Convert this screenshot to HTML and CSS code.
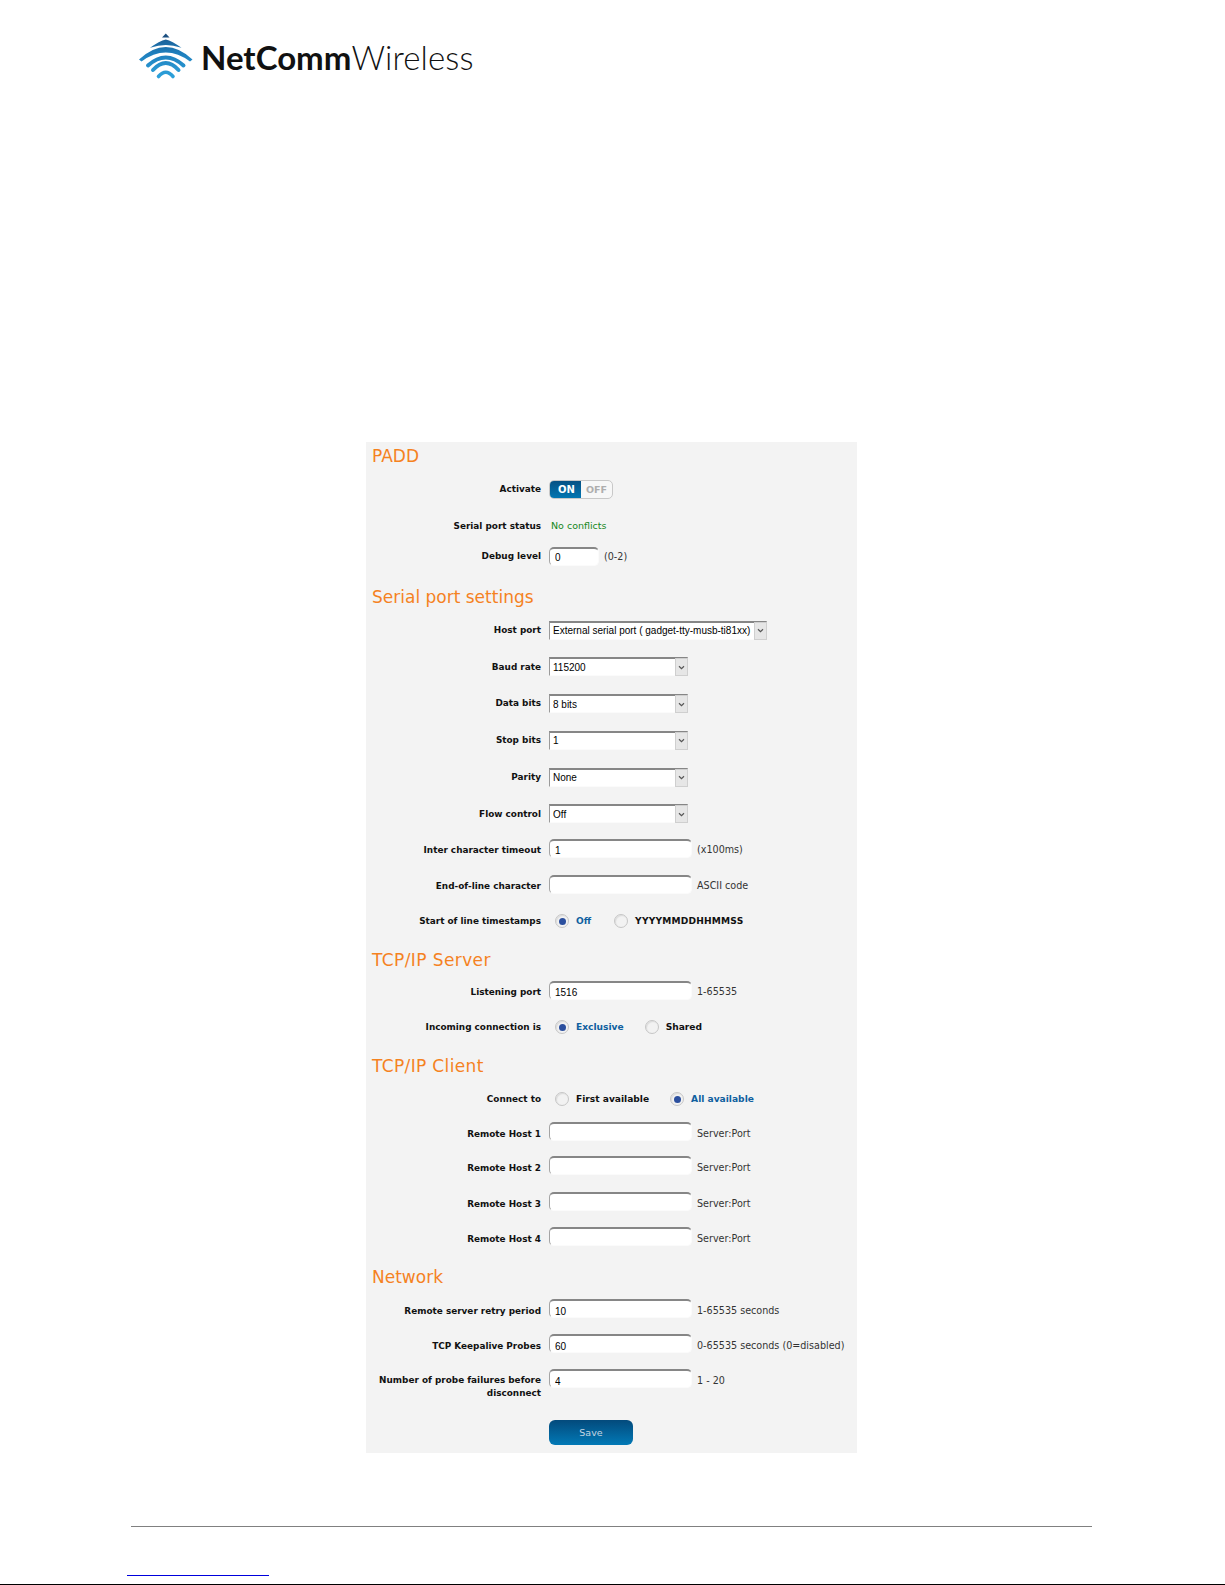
FILE: index.html
```html
<!DOCTYPE html>
<html lang="en">
<head>
<meta charset="utf-8">
<title>PADD settings</title>
<link rel="stylesheet" href="styles.css">
</head>
<body>
<div class="page">
  <header class="header">
    <svg class="logo-icon" viewBox="138 32 56 48" aria-hidden="true">
      <defs>
        <linearGradient id="waves" gradientUnits="userSpaceOnUse" x1="0" y1="33" x2="0" y2="78">
          <stop offset="0" stop-color="#1b5488"/>
          <stop offset="0.45" stop-color="#1f7fbd"/>
          <stop offset="1" stop-color="#2ea3dc"/>
        </linearGradient>
      </defs>
      <path fill="#1b4f80" d="M165.8 33.5 L169.5 37.5 H162 Z"/>
      <path fill="url(#waves)" d="M165.8 39.5 Q172 41 181.5 47.8 Q173 45 165.8 45 Q158.5 45 150 47.8 Q159.5 41 165.8 39.5 Z"/>
      <path fill="url(#waves)" d="M165.8 47 Q179 47 192.5 59.5 L190 61.5 Q178 52.5 165.8 52.5 Q153.5 52.5 141.5 61.5 L139 59.5 Q152.5 47 165.8 47 Z"/>
      <path fill="none" stroke="url(#waves)" stroke-width="4" stroke-linecap="round" d="M148 65 Q165.8 49 183.5 65" transform="translate(0 0.5)"/>
      <path fill="none" stroke="url(#waves)" stroke-width="4" stroke-linecap="round" d="M153 70 Q165.8 56 178.5 70"/>
      <path fill="none" stroke="url(#waves)" stroke-width="3.6" stroke-linecap="round" d="M158.5 76.5 Q165.8 68 173 76.5"/>
    </svg>
    <div class="logo-text"><span class="logo-strong">NetComm</span><span class="logo-light">Wireless</span></div>
  </header>

  <main class="panel">
    <h2 class="heading heading-first">PADD</h2>
    <div class="row gap-17h"><span class="label">Activate</span>
      <div class="toggle"><span class="toggle-on">ON</span><span class="toggle-off">OFF</span></div></div>
    <div class="row gap-11"><span class="label">Serial port status</span><span class="status">No conflicts</span></div>
    <div class="row"><span class="label">Debug level</span>
      <div class="field"><input class="input input-short" type="text" value="0"><span class="hint">(0-2)</span></div></div>

    <h2 class="heading sec-serial">Serial port settings</h2>
    <div class="row gap-select"><span class="label">Host port</span>
      <div class="select-wrap select-long"><select class="select"><option>External serial port ( gadget-tty-musb-ti81xx)</option></select>
        <span class="select-arrow"><svg viewBox="0 0 8 6"><path d="M1 1.5 L4 4.5 L7 1.5" fill="none" stroke="#555" stroke-width="1.4"/></svg></span></div></div>
    <div class="row gap-select"><span class="label">Baud rate</span>
      <div class="select-wrap"><select class="select"><option>115200</option></select>
        <span class="select-arrow"><svg viewBox="0 0 8 6"><path d="M1 1.5 L4 4.5 L7 1.5" fill="none" stroke="#555" stroke-width="1.4"/></svg></span></div></div>
    <div class="row gap-select"><span class="label">Data bits</span>
      <div class="select-wrap"><select class="select"><option>8 bits</option></select>
        <span class="select-arrow"><svg viewBox="0 0 8 6"><path d="M1 1.5 L4 4.5 L7 1.5" fill="none" stroke="#555" stroke-width="1.4"/></svg></span></div></div>
    <div class="row gap-select"><span class="label">Stop bits</span>
      <div class="select-wrap"><select class="select"><option>1</option></select>
        <span class="select-arrow"><svg viewBox="0 0 8 6"><path d="M1 1.5 L4 4.5 L7 1.5" fill="none" stroke="#555" stroke-width="1.4"/></svg></span></div></div>
    <div class="row gap-select"><span class="label">Parity</span>
      <div class="select-wrap"><select class="select"><option>None</option></select>
        <span class="select-arrow"><svg viewBox="0 0 8 6"><path d="M1 1.5 L4 4.5 L7 1.5" fill="none" stroke="#555" stroke-width="1.4"/></svg></span></div></div>
    <div class="row gap-17"><span class="label">Flow control</span>
      <div class="select-wrap"><select class="select"><option>Off</option></select>
        <span class="select-arrow"><svg viewBox="0 0 8 6"><path d="M1 1.5 L4 4.5 L7 1.5" fill="none" stroke="#555" stroke-width="1.4"/></svg></span></div></div>
    <div class="row gap-17"><span class="label">Inter character timeout</span>
      <div class="field field-up1"><input class="input" type="text" value="1"><span class="hint">(x100ms)</span></div></div>
    <div class="row gap-16h"><span class="label">End-of-line character</span>
      <div class="field field-up1"><input class="input" type="text" value=""><span class="hint">ASCII code</span></div></div>
    <div class="row"><span class="label">Start of line timestamps</span>
      <div class="radios"><span class="radio radio-on"></span><span class="radio-label radio-label-on radio-label-wide">Off</span>
        <span class="radio"></span><span class="radio-label radio-label-caps">YYYYMMDDHHMMSS</span></div></div>

    <h2 class="heading sec-server">TCP/IP Server</h2>
    <div class="row gap-16h"><span class="label">Listening port</span>
      <div class="field field-up1"><input class="input" type="text" value="1516"><span class="hint">1-65535</span></div></div>
    <div class="row"><span class="label">Incoming connection is</span>
      <div class="radios"><span class="radio radio-on"></span><span class="radio-label radio-label-on">Exclusive</span>
        <span class="radio"></span><span class="radio-label">Shared</span></div></div>

    <h2 class="heading sec-client">TCP/IP Client</h2>
    <div class="row gap-15h"><span class="label">Connect to</span>
      <div class="radios"><span class="radio"></span><span class="radio-label">First available</span>
        <span class="radio radio-on"></span><span class="radio-label radio-label-on">All available</span></div></div>
    <div class="row gap-15"><span class="label">Remote Host 1</span>
      <div class="field field-up2"><input class="input" type="text" value=""><span class="hint">Server:Port</span></div></div>
    <div class="row gap-17"><span class="label">Remote Host 2</span>
      <div class="field field-up2"><input class="input" type="text" value=""><span class="hint">Server:Port</span></div></div>
    <div class="row gap-16"><span class="label">Remote Host 3</span>
      <div class="field field-up2"><input class="input" type="text" value=""><span class="hint">Server:Port</span></div></div>
    <div class="row"><span class="label">Remote Host 4</span>
      <div class="field field-up2"><input class="input" type="text" value=""><span class="hint">Server:Port</span></div></div>

    <h2 class="heading sec-network">Network</h2>
    <div class="row gap-16"><span class="label">Remote server retry period</span>
      <div class="field field-up2"><input class="input" type="text" value="10"><span class="hint">1-65535 seconds</span></div></div>
    <div class="row gap-16"><span class="label">TCP Keepalive Probes</span>
      <div class="field field-up2"><input class="input" type="text" value="60"><span class="hint">0-65535 seconds (0=disabled)</span></div></div>
    <div class="row row-tall"><span class="label">Number of probe failures before disconnect</span>
      <div class="field field-tall"><input class="input" type="text" value="4"><span class="hint">1 - 20</span></div></div>

    <div class="actions"><button class="save" type="button">Save</button></div>
  </main>

  <footer class="footer">
    <hr class="footer-rule">
    <a class="footer-link" href="#"></a>
    <div class="footer-edge"></div>
  </footer>
</div>
</body>
</html>
```
FILE: styles.css
```css
* { box-sizing: border-box; }
html, body { margin: 0; padding: 0; background: #fff; }
body { font-family: "DejaVu Sans", Verdana, sans-serif; color: #000; }

.page { width: 1225px; height: 1585px; overflow: hidden; display: flex; flex-direction: column; }

/* Header / logo */
.header { height: 442px; padding: 32px 0 0 138px; display: flex; align-items: flex-start; gap: 7px; flex: none; }
.logo-icon { width: 56px; height: 48px; flex: none; }
.logo-text { font-family: Lato, "Open Sans", sans-serif; line-height: 50px; color: #111; white-space: nowrap; }
.logo-strong { font-size: 33px; font-weight: 700; }
.logo-light { font-size: 33px; font-weight: 300; letter-spacing: 0.1px; }

/* Panel */
.panel { width: 491px; margin-left: 366px; padding: 3px 0 8px; background: #f3f3f3; flex: none; }

.heading { margin: 0 0 13px; padding-left: 6px; font-size: 17px; line-height: 22px; font-weight: 400; color: #f5821f; }
.sec-serial { margin-top: 19.5px; }
.sec-server { margin-top: 18.5px; margin-bottom: 11px; letter-spacing: 0.4px; }
.sec-client { margin-top: 18.5px; margin-bottom: 12.5px; letter-spacing: 0.35px; }
.sec-network { margin-top: 18px; margin-bottom: 13px; }

.row { display: grid; grid-template-columns: 175px 1fr; grid-template-rows: 19px; column-gap: 8px; align-items: center; height: 19px; }
.row-tall { grid-template-rows: 25px; height: 25px; align-items: start; }
.row-tall .label { padding-top: 3px; }
.gap-11 { margin-bottom: 11.5px; }
.gap-15 { margin-bottom: 15px; }
.gap-15h { margin-bottom: 15.5px; }
.gap-16 { margin-bottom: 16px; }
.gap-16h { margin-bottom: 16.5px; }
.gap-17 { margin-bottom: 17px; }
.gap-17h { margin-bottom: 17.5px; }
.gap-select { margin-bottom: 17.8px; }

.label { text-align: right; font-size: 8.9px; line-height: 12.5px; font-weight: 700; color: #111; }
.hint { font-size: 9.6px; color: #333; white-space: nowrap; }
.status { padding: 0 0 2px 2px; font-size: 9.5px; color: #15881c; }

.field { display: flex; align-items: center; gap: 5px; height: 19px; }
/* Inputs sit slightly above the label's centre line while their text and hint stay on it */
.field-up1 { margin-bottom: 2px; }
.field-up1 .input { padding-top: 2px; }
.field-up1 .hint { padding-top: 2px; }
.field-up2 { margin-bottom: 4px; }
.field-up2 .input { padding-top: 4px; }
.field-up2 .hint { padding-top: 4px; }
.field-tall { margin-top: -2px; }
.field-tall .input { padding-top: 4px; }
.field-tall .hint { padding-top: 4px; }

.input {
  width: 143px; height: 19px; padding: 0 0 0 5px;
  border: 1px solid #fbfbfb; border-top: 2px solid #868686; border-left-color: #a4a4a4;
  border-radius: 5px; background: #fff;
  font-family: "Liberation Sans", Arial, sans-serif; font-size: 10px; color: #000; outline: none;
}
.input-short { width: 50px; }

.select-wrap { position: relative; width: 139px; height: 19px; }
.select-long { width: 218px; }
.select {
  display: block; width: 100%; height: 100%; padding: 0 14px 0 3px; appearance: none;
  border: 1px solid #fbfbfb; border-top: 2px solid #868686; border-left-color: #9a9a9a; border-radius: 0;
  background: #fff; font-family: "Liberation Sans", Arial, sans-serif; font-size: 10px; color: #000; outline: none;
}
.select-arrow {
  position: absolute; top: 1px; right: 0; bottom: 0; width: 13px;
  display: flex; align-items: center; justify-content: center;
  background: #e6e6e6; border: 1px solid #cfcfcf;
}
.select-arrow svg { width: 7px; height: 5px; display: block; }

.radios { display: flex; align-items: center; height: 19px; padding-left: 6px; }
.radio {
  width: 14px; height: 14px; border-radius: 50%; flex: none; position: relative;
  background: #f2f2f2; border: 1px solid #c6c6c6; box-shadow: inset 1px 1px 1px #dcdcdc;
}
.radio-on::after {
  content: ""; position: absolute; left: 2.5px; top: 2.5px; width: 7px; height: 7px;
  border-radius: 50%; background: #2b4f9e;
}
.radio-label { margin-left: 7px; margin-right: 21px; font-size: 9.1px; font-weight: 700; color: #111; white-space: nowrap; }
.radio-label-on { color: #0f5f9f; }
.radio-label-wide { margin-right: 23px; }
.radio-label-caps { letter-spacing: 0.2px; }

.toggle { display: flex; width: 64px; height: 19px; border: 1px solid #c8c8c8; border-radius: 5px; overflow: hidden; background: #f7f7f7; }
.toggle-on { width: 32px; display: flex; align-items: center; justify-content: center; margin: -1px 0 -1px -1px; padding-left: 3px; background: linear-gradient(#064f82, #0278b4); color: #fff; font-size: 10px; font-weight: 700; }
.toggle-off { flex: 1; display: flex; align-items: center; justify-content: center; color: #aeaeae; font-size: 9.5px; font-weight: 700; }

.actions { margin-top: 24px; padding-left: 183px; }
.save {
  display: block; width: 84px; height: 25px; padding: 0; border: 0; border-radius: 6px;
  background: linear-gradient(#034a7c, #0279b6); color: #c4d6e2;
  font-family: "DejaVu Sans", Verdana, sans-serif; font-size: 9.5px;
}

/* Footer */
.footer { flex: none; display: flex; flex-direction: column; }
.footer-rule { margin: 73px 0 0 131px; width: 961px; height: 1px; border: 0; background: #808080; }
.footer-link { display: block; margin: 48px 0 0 127px; width: 142px; height: 1px; background: #0000dd; }
.footer-edge { margin-top: 8px; height: 1px; background: #000; }
```
